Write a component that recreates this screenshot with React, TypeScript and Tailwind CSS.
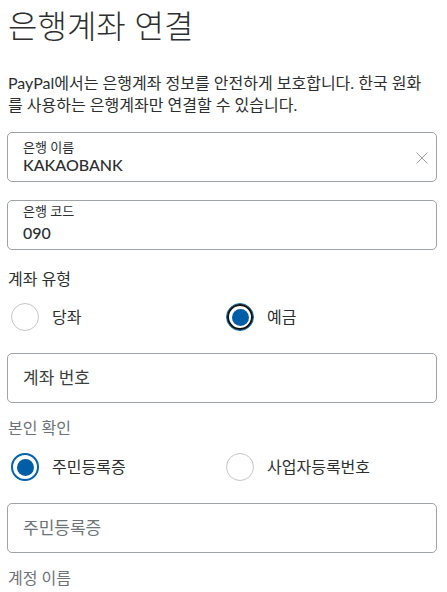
import React from "react";

const FONT = { fontFamily: 'Lato, "Noto Sans CJK KR", "Noto Sans", sans-serif' };

function Radio({ checked, focused, label }: { checked?: boolean; focused?: boolean; label: string }) {
  return (
    <div className="flex items-center ml-[4px]">
      {checked && focused ? (
        <div className="w-[28px] h-[28px] rounded-full border border-[#0070ba] flex items-center justify-center shrink-0">
          <div className="w-[26px] h-[26px] rounded-full border-[2px] border-[#111] bg-white flex items-center justify-center">
            <div className="w-[17px] h-[17px] rounded-full bg-[#005ea6]" />
          </div>
        </div>
      ) : checked ? (
        <div className="w-[28px] h-[28px] rounded-full border-[2px] border-[#0063ad] bg-white flex items-center justify-center shrink-0">
          <div className="w-[17px] h-[17px] rounded-full bg-[#005ea6]" />
        </div>
      ) : (
        <div className="w-[28px] h-[28px] rounded-full border border-[#c3c7ca] bg-white shrink-0" />
      )}
      <span className="ml-[13px] text-[16px] leading-[22px] text-[#2c2e2f]">{label}</span>
    </div>
  );
}

export default function App() {
  return (
    <div className="w-[447px] bg-white pl-[7px] pr-[10px] pt-[7px] pb-[10px] text-[#2c2e2f]" style={FONT}>
      <h1 className="text-[32px] leading-[38px] font-light ml-[1px]">은행계좌 연결</h1>
      <p className="mt-[27px] ml-[1px] w-[420px] text-[16px] leading-[22px] break-all">
        PayPal에서는 은행계좌 정보를 안전하게 보호합니다. 한국 원화를 사용하는 은행계좌만 연결할 수 있습니다.
      </p>

      <div className="mt-[16px] h-[50px] rounded-[5px] border border-[#9da3a6] flex items-start justify-between pl-[15px] pr-[8px] pt-[6px]">
        <div className="flex flex-col">
          <span className="text-[13px] leading-[16px]">은행 이름</span>
          <span className="text-[16px] leading-[20px] font-medium">KAKAOBANK</span>
        </div>
        <svg width="12" height="12" viewBox="0 0 12 12" className="mt-[13px]">
          <path d="M0.5 0.5 L11.5 11.5 M11.5 0.5 L0.5 11.5" stroke="#9a9e9f" strokeWidth="1" fill="none" />
        </svg>
      </div>

      <div className="mt-[18px] h-[50px] rounded-[5px] border border-[#9da3a6] flex flex-col pl-[15px] pt-[2px]">
        <span className="text-[13px] leading-[16px]">은행 코드</span>
        <span className="mt-[4px] text-[16px] leading-[20px] font-medium">090</span>
      </div>

      <div className="mt-[18px] text-[16px] leading-[22px] ml-[1px]">계좌 유형</div>
      <div className="mt-[13px] grid grid-cols-2">
        <Radio label="당좌" />
        <Radio label="예금" checked focused />
      </div>

      <div className="mt-[22px] h-[50px] rounded-[5px] border border-[#9da3a6] flex items-center pl-[15px]">
        <span className="text-[17px] leading-[22px] text-[#3c3f40]">계좌 번호</span>
      </div>

      <div className="mt-[14px] text-[16px] leading-[22px] text-[#6c7378] ml-[1px]">본인 확인</div>
      <div className="mt-[14px] grid grid-cols-2">
        <Radio label="주민등록증" checked />
        <Radio label="사업자등록번호" />
      </div>

      <div className="mt-[22px] h-[50px] rounded-[5px] border border-[#9da3a6] flex items-center pl-[15px]">
        <span className="text-[17px] leading-[22px] text-[#6c7378]">주민등록증</span>
      </div>

      <div className="mt-[14px] text-[16px] leading-[22px] text-[#6c7378] ml-[1px]">계정 이름</div>
    </div>
  );
}
